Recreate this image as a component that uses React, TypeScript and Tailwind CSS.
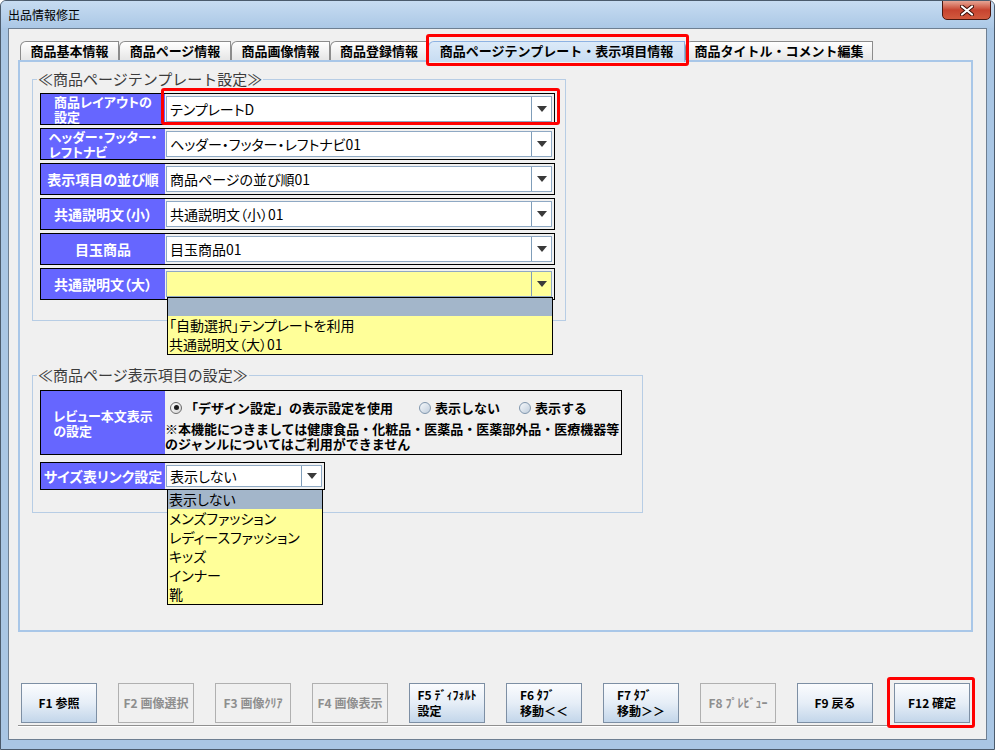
import React from "react";

const font = "[font-family:'Noto_Sans_CJK_JP','Liberation_Sans',sans-serif]";

function Arrow() {
  return (
    <svg width="10" height="6" viewBox="0 0 10 6">
      <path d="M0 0h10L5 6z" fill="#3a3a3a" />
    </svg>
  );
}

function Combo({ value, yellow }: { value: string; yellow?: boolean }) {
  return (
    <div className="flex-1 flex pl-[1px] pr-[2px] py-[2px]">
      <div
        className={`flex-1 flex border border-[#8fa9c4] ${
          yellow ? "bg-[#ffff99]" : "bg-white"
        }`}
      >
        <div className="flex-1 flex items-center pl-[3px] text-[14px] text-black [font-feature-settings:'palt'] whitespace-nowrap border-r border-[#7f9db9]">
          {value}
        </div>
        <div className="w-[19px] flex items-center justify-center">
          <Arrow />
        </div>
      </div>
    </div>
  );
}

function Label({ lines }: { lines: string[] }) {
  const two = lines.length > 1;
  return (
    <div
      className={`w-[124px] shrink-0 bg-[#6666ff] flex items-center justify-center text-white font-bold [font-feature-settings:'palt'] ${
        two ? "text-[13px] leading-[15px]" : "text-[14px] leading-[16px]"
      }`}
    >
      <div className="text-left">
        {lines.map((l) => (
          <div key={l} className="whitespace-nowrap">
            {l}
          </div>
        ))}
      </div>
    </div>
  );
}

function Row({
  lines,
  value,
  yellow,
  children,
}: {
  lines: string[];
  value: string;
  yellow?: boolean;
  children?: React.ReactNode;
}) {
  return (
    <div className="relative flex h-[32px] w-[515px] border border-black">
      <Label lines={lines} />
      <Combo value={value} yellow={yellow} />
      {children}
    </div>
  );
}

function Radio({ on }: { on?: boolean }) {
  return (
    <span
      className={`w-[12px] h-[12px] rounded-full border flex items-center justify-center shrink-0 ${
        on
          ? "border-[#6b6b6b] bg-linear-to-br from-white to-[#d6d6d6]"
          : "border-[#8096ad] bg-linear-to-br from-[#f7f9fb] to-[#bfcddc]"
      }`}
    >
      {on && <span className="w-[5px] h-[5px] rounded-full bg-[#1c1c1c]" />}
    </span>
  );
}

const tabs = [
  { t: "商品基本情報", w: "w-[99px]" },
  { t: "商品ページ情報", w: "w-[112px]" },
  { t: "商品画像情報", w: "w-[99px]" },
  { t: "商品登録情報", w: "w-[98px]" },
  { t: "商品ページテンプレート・表示項目情報", w: "w-[257px]", sel: true },
  { t: "商品タイトル・コメント編集", w: "w-[188px]" },
];

const buttons = [
  { lines: ["F1 参照"], on: true },
  { lines: ["F2 画像選択"], on: false },
  { lines: ["F3 画像ｸﾘｱ"], on: false },
  { lines: ["F4 画像表示"], on: false },
  { lines: ["F5 ﾃﾞｨﾌｫﾙﾄ", "設定"], on: true },
  { lines: ["F6 ﾀﾌﾞ", "移動＜＜"], on: true },
  { lines: ["F7 ﾀﾌﾞ", "移動＞＞"], on: true },
  { lines: ["F8 ﾌﾟﾚﾋﾞｭｰ"], on: false },
  { lines: ["F9 戻る"], on: true },
  { lines: ["F12 確定"], on: true },
];

export default function App() {
  return (
    <div
      className={`relative w-[995px] h-[750px] overflow-hidden flex flex-col bg-[#a9c6e4] border border-[#4b5b6c] rounded-t-[6px] ${font}`}
    >
      {/* title bar */}
      <div className="h-[27px] shrink-0 flex items-start bg-linear-to-b from-[#c7dcf1] to-[#abc8e6]">
        <div className="pl-[7px] pt-[6px] text-[12px] leading-[16px] text-black">
          出品情報修正
        </div>
        <div className="ml-auto mr-[3px] w-[49px] h-[20px] -mt-[1px] rounded-b-[5px] border border-[#4a1810] bg-linear-to-b from-[#e6a494] via-[#c7432f] to-[#d25a3e] flex items-center justify-center">
          <svg width="14" height="11" viewBox="0 0 14 11">
            <path d="M2 1.5l10 8M12 1.5l-10 8" stroke="#3a0d06" strokeWidth="4" strokeLinecap="round" />
            <path d="M2 1.5l10 8M12 1.5l-10 8" stroke="#ffffff" strokeWidth="2.2" strokeLinecap="round" />
          </svg>
        </div>
      </div>

      {/* client area */}
      <div className="flex-1 mx-[7px] mb-[9px] border border-[#6e7f92] bg-[#f0f0f0] flex flex-col pl-[9px] pr-[13px]">
        {/* tab strip */}
        <div className="h-[31px] shrink-0 flex items-end pl-[2px]">
          {tabs.map((tb) => (
            <div
              key={tb.t}
              className={`${tb.w} flex items-center justify-center font-bold text-[13px] leading-[16px] text-black whitespace-nowrap rounded-tl-[6px] ${
                tb.sel
                  ? "h-[21px] border border-b-0 border-[#8db2e3] bg-linear-to-b from-[#dceaf8] to-[#c7dcf2] relative z-10 -mb-[2px] pb-[2px]"
                  : "h-[19px] border border-b-0 border-[#8c8c8c] bg-linear-to-b from-white to-[#e6e6e6]"
              }`}
            >
              {tb.t}
            </div>
          ))}
        </div>

        {/* tab panel */}
        <div className="h-[572px] shrink-0 border-2 border-[#a9c7e8] bg-[#f0f0f0] pl-[12px] pt-[8px]">
          <fieldset className="w-[534px] border border-[#b7cde5] px-[7px] pb-[20px]">
            <legend className="-ml-[3px] px-[1px] text-[15px] leading-[18px] text-[#3c3c3c] whitespace-nowrap">
              ≪商品ページテンプレート設定≫
            </legend>
            <div className="flex flex-col gap-[3px] pt-[5px]">
              <Row lines={["商品レイアウトの", "設定"]} value="テンプレートD" />
              <Row lines={["ヘッダー・フッター・", "レフトナビ"]} value="ヘッダー・フッター・レフトナビ01" />
              <Row lines={["表示項目の並び順"]} value="商品ページの並び順01" />
              <Row lines={["共通説明文（小）"]} value="共通説明文（小）01" />
              <Row lines={["目玉商品"]} value="目玉商品01" />
              <Row lines={["共通説明文（大）"]} value="" yellow>
                <div className="absolute left-[126px] top-[100%] -mt-[2px] w-[386px] z-20 border border-black bg-[#ffff99] text-[14px] leading-[19px] text-black [font-feature-settings:'palt']">
                  <div className="h-[18px] bg-[#a3b6ca]" />
                  <div className="pl-[1px]">「自動選択」テンプレートを利用</div>
                  <div className="pl-[1px]">共通説明文（大）01</div>
                </div>
              </Row>
            </div>
          </fieldset>

          <fieldset className="mt-[45px] w-[611px] border border-[#b7cde5] px-[7px] pb-[22px]">
            <legend className="-ml-[3px] px-[1px] text-[15px] leading-[18px] text-[#3c3c3c] whitespace-nowrap">
              ≪商品ページ表示項目の設定≫
            </legend>
            <div className="flex flex-col gap-[7px] pt-[6px]">
              <div className="flex h-[65px] w-[582px] border border-black">
                <Label lines={["レビュー本文表示", "の設定"]} />
                <div className="flex-1 flex flex-col text-[13px] font-bold text-black">
                  <div className="flex items-center h-[15px] mt-[9px] pl-[5px]">
                    <Radio on />
                    <span className="ml-[3px] whitespace-nowrap">「デザイン設定」の表示設定を使用</span>
                    <span className="ml-[26px]">
                      <Radio />
                    </span>
                    <span className="ml-[4px] whitespace-nowrap">表示しない</span>
                    <span className="ml-[19px]">
                      <Radio />
                    </span>
                    <span className="ml-[4px] whitespace-nowrap">表示する</span>
                  </div>
                  <div className="mt-[6px] leading-[15px] whitespace-nowrap">
                    <div>※本機能につきましては健康食品・化粧品・医薬品・医薬部外品・医療機器等</div>
                    <div>のジャンルについてはご利用ができません</div>
                  </div>
                </div>
              </div>

              <div className="relative flex h-[28px] w-[285px] border border-black">
                <Label lines={["サイズ表リンク設定"]} />
                <Combo value="表示しない" />
                <div className="absolute left-[126px] top-[100%] w-[156px] z-20 border border-black bg-[#ffff99] text-[14px] leading-[19px] text-black [font-feature-settings:'palt']">
                  <div className="bg-[#a3b6ca] pl-[1px]">表示しない</div>
                  <div className="pl-[1px]">メンズファッション</div>
                  <div className="pl-[1px]">レディースファッション</div>
                  <div className="pl-[1px]">キッズ</div>
                  <div className="pl-[1px]">インナー</div>
                  <div className="pl-[1px]">靴</div>
                </div>
              </div>
            </div>
          </fieldset>
        </div>

        {/* function buttons */}
        <div className="mt-[51px] h-[40px] shrink-0 flex gap-[21px] pl-[3px]">
          {buttons.map((b) => (
            <div
              key={b.lines[0]}
              className={`w-[76px] h-[40px] flex items-center justify-center border text-[12px] font-bold leading-[16px] ${
                b.on
                  ? "border-[#7d8fa4] bg-linear-to-b from-[#fbfcfe] via-[#e6eef7] to-[#c3d6ea] text-black"
                  : "border-[#b0b0b0] bg-[#f0f0f0] text-[#8e8e8e]"
              }`}
            >
              <div className="text-left">
                {b.lines.map((l) => (
                  <div key={l} className="whitespace-nowrap">
                    {l}
                  </div>
                ))}
              </div>
            </div>
          ))}
        </div>
        <div className="mt-[2px] h-[2px] shrink-0 border-t border-[#8f8f8f] border-b border-b-white" />
      </div>

      {/* red annotation marks */}
      <div className="absolute left-[425px] top-[33px] w-[263px] h-[32px] border-[3px] border-[#ff0000] rounded-[3px] z-30" />
      <div className="absolute left-[160px] top-[87px] w-[399px] h-[37px] border-[3px] border-[#ff0000] rounded-[3px] z-30" />
      <div className="absolute left-[886px] top-[676px] w-[88px] h-[51px] border-[3px] border-[#ff0000] rounded-[3px] z-30" />
    </div>
  );
}
